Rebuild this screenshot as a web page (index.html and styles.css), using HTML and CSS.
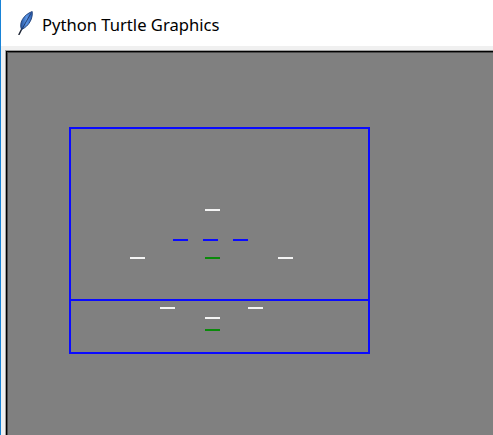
FILE: index.html
```html
<!DOCTYPE html>
<html>
<head>
<meta charset="utf-8">
<title>Python Turtle Graphics</title>
<link rel="stylesheet" href="styles.css">
</head>
<body>
<div class="window">
  <div class="titlebar">
    <svg class="app-icon" width="16" height="24" viewBox="0 0 16 24">
      <defs>
        <linearGradient id="fg" x1="0" y1="0" x2="1" y2="0">
          <stop offset="0" stop-color="#23539f"/>
          <stop offset="0.5" stop-color="#5b95e4"/>
          <stop offset="1" stop-color="#2a5fb5"/>
        </linearGradient>
      </defs>
      <path d="M2 23.5 L6 15.5" stroke="#1c2433" stroke-width="1.5" stroke-linecap="round"/>
      <path d="M4.6 18.5 C1.6 12.5 6.2 3.8 15.2 0.5 C16 6.8 12.6 14.8 4.6 18.5 Z" fill="url(#fg)" stroke="#1d3d74" stroke-width="0.9"/>
      <path d="M5 18 L14 2.2" stroke="#1a2c55" stroke-width="0.8"/>
    </svg>
    <span class="title">Python Turtle Graphics</span>
  </div>
  <div class="frame">
    <div class="sunken">
      <div class="sunken-inner">
        <svg class="canvas" width="485" height="382" viewBox="0 0 485 382">
          <rect x="0" y="0" width="485" height="382" fill="#808080"/>
          <g stroke="#0a0aff" stroke-width="2" fill="none">
            <rect x="62" y="75" width="299" height="225"/>
            <line x1="61" y1="247" x2="362" y2="247"/>
          </g>
          <g stroke-width="2">
            <line x1="197" y1="157" x2="212" y2="157" stroke="#f4f4f4"/>
            <line x1="165" y1="187" x2="180" y2="187" stroke="#0a0aff"/>
            <line x1="195" y1="187" x2="210" y2="187" stroke="#0a0aff"/>
            <line x1="225" y1="187" x2="240" y2="187" stroke="#0a0aff"/>
            <line x1="122" y1="205" x2="137" y2="205" stroke="#f4f4f4"/>
            <line x1="270" y1="205" x2="285" y2="205" stroke="#f4f4f4"/>
            <line x1="197" y1="205" x2="212" y2="205" stroke="#0a8a0a"/>
            <line x1="152" y1="255" x2="167" y2="255" stroke="#f4f4f4"/>
            <line x1="240" y1="255" x2="255" y2="255" stroke="#f4f4f4"/>
            <line x1="197" y1="265" x2="212" y2="265" stroke="#f4f4f4"/>
            <line x1="197" y1="277" x2="212" y2="277" stroke="#0a8a0a"/>
          </g>
        </svg>
      </div>
    </div>
  </div>
</div>
</body>
</html>
```

FILE: styles.css
```css
html, body {
  margin: 0;
  padding: 0;
  background: #ffffff;
  overflow: hidden;
}
.window {
  width: 492px;
  height: 435px;
  border-left: 1px solid #1883d7;
  display: flex;
  flex-direction: column;
  overflow: hidden;
}
.titlebar {
  height: 46px;
  flex: none;
  display: flex;
  align-items: center;
  padding-left: 16px;
  gap: 9px;
  background: #ffffff;
}
.app-icon {
  display: block;
  flex: none;
}
.title {
  font-family: "Segoe UI", "Noto Sans", "Open Sans", sans-serif;
  font-size: 16.6px;
  color: #000000;
  white-space: nowrap;
  position: relative;
  top: 1px;
}
.frame {
  flex: 1;
  background: #f0f0f0;
  padding: 4px 0 0 4px;
  overflow: hidden;
}
.sunken {
  border-top: 1px solid #a0a0a0;
  border-left: 1px solid #a0a0a0;
  height: 100%;
}
.sunken-inner {
  border-top: 1px solid #000000;
  border-left: 1px solid #000000;
  height: 100%;
}
.canvas {
  display: block;
  border-top: 1px solid #4a4a4a;
  border-left: 1px solid #4a4a4a;
}
```
